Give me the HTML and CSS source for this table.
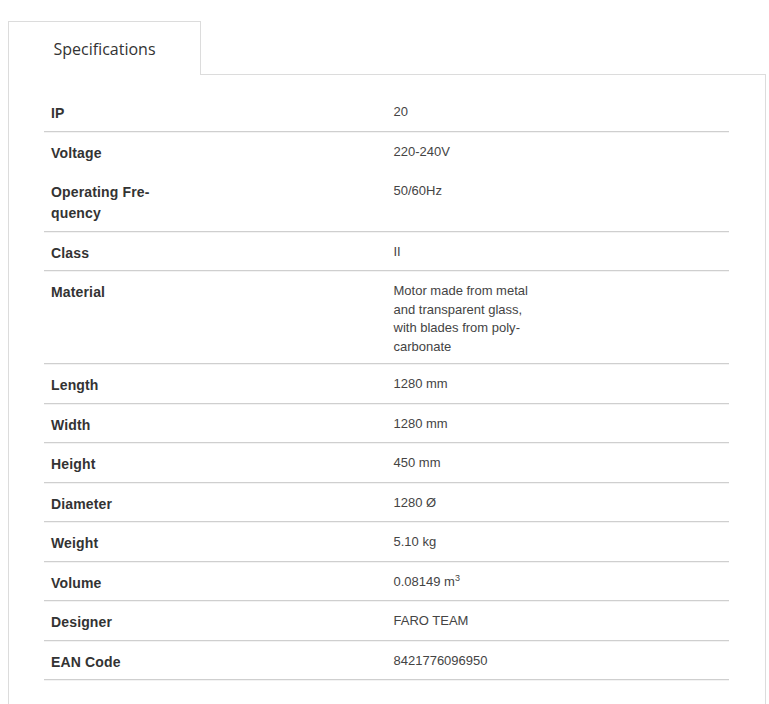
FILE: index.html
```html
<!DOCTYPE html>
<html lang="en">
<head>
<meta charset="utf-8">
<title>Specifications</title>
<link rel="stylesheet" href="styles.css">
</head>
<body>
<div class="tabs">
  <div class="tab-bar">
    <div class="tab">Specifications</div>
    <div class="tab-fill"></div>
  </div>
  <div class="panel">
    <div class="specs">
      <div class="row"><div class="label"><span>IP</span></div><div class="value"><span>20</span></div></div>
      <div class="row no-line"><div class="label"><span>Voltage</span></div><div class="value"><span>220-240V</span></div></div>
      <div class="row"><div class="label"><span>Operating Fre&shy;quency</span></div><div class="value"><span>50/60Hz</span></div></div>
      <div class="row"><div class="label"><span>Class</span></div><div class="value"><span>II</span></div></div>
      <div class="row"><div class="label"><span>Material</span></div><div class="value"><span>Motor made from metal and transparent glass, with blades from poly&shy;carbonate</span></div></div>
      <div class="row"><div class="label"><span>Length</span></div><div class="value"><span>1280 mm</span></div></div>
      <div class="row"><div class="label"><span>Width</span></div><div class="value"><span>1280 mm</span></div></div>
      <div class="row"><div class="label"><span>Height</span></div><div class="value"><span>450 mm</span></div></div>
      <div class="row"><div class="label"><span>Diameter</span></div><div class="value"><span>1280 Ø</span></div></div>
      <div class="row"><div class="label"><span>Weight</span></div><div class="value"><span>5.10 kg</span></div></div>
      <div class="row"><div class="label"><span>Volume</span></div><div class="value"><span>0.08149 m<sup>3</sup></span></div></div>
      <div class="row"><div class="label"><span>Designer</span></div><div class="value"><span>FARO TEAM</span></div></div>
      <div class="row"><div class="label"><span>EAN Code</span></div><div class="value"><span>8421776096950</span></div></div>
    </div>
  </div>
</div>
</body>
</html>
```
FILE: styles.css
```css
html, body {
  margin: 0;
  padding: 0;
  background: #fff;
}

body {
  font-family: "Liberation Sans", Arial, sans-serif;
  color: #333;
}

.tabs {
  width: 758px;
  padding: 21px 0 0 8px;
}

.tab-bar {
  display: flex;
}

.tab {
  width: 191px;
  border: 1px solid #dcdcdc;
  border-bottom: none;
  padding: 15px 0 14px;
  text-align: center;
  font-family: "Open Sans", sans-serif;
  font-size: 16px;
  line-height: 24px;
  color: #333;
  background: #fff;
}

.tab-fill {
  flex: 1;
  border-bottom: 1px solid #dcdcdc;
}

.panel {
  border-left: 1px solid #dcdcdc;
  border-right: 1px solid #dcdcdc;
  padding: 17px 36px 40px 35px;
  min-height: 640px;
}

.row {
  display: grid;
  grid-template-columns: 1fr 1fr;
  border-bottom: 1px solid #cfcfcf;
  box-shadow: 0 1px 0 #f3f3f3;
}

.row.no-line {
  border-bottom: 1px solid transparent;
  box-shadow: none;
}

.label,
.value {
  padding: 11px 7px 6.5px;
}

.label span {
  display: block;
  max-width: 115px;
  font-weight: bold;
  font-size: 14px;
  line-height: 21px;
  letter-spacing: 0.15px;
  color: #333;
  hyphens: manual;
}

.value span {
  display: block;
  max-width: 148px;
  font-size: 13px;
  line-height: 18.7px;
  color: #444;
  hyphens: manual;
}

.value sup {
  font-size: 9px;
  line-height: 0;
  vertical-align: 5px;
}
```
